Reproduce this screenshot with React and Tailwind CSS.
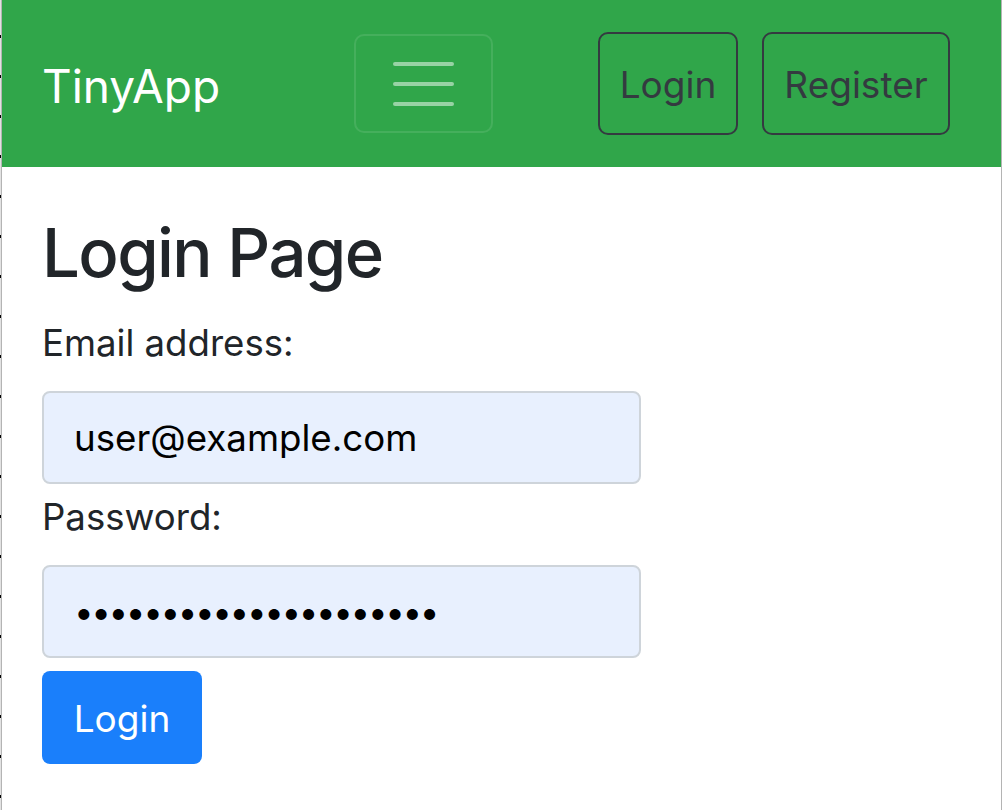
const App = () => {
  return (
    <div className="flex min-h-[810px] w-[1004px] bg-white font-['Inter',sans-serif]">
      {/* window edge on the left */}
      <div className="w-[1px] bg-[#e2e2e2] bg-[repeating-linear-gradient(to_bottom,transparent_0,transparent_35px,#000_35px,#000_38px,transparent_38px,transparent_40px)]"></div>
      <div className="w-[1px] bg-[#b4b4b4]"></div>

      <div className="flex-1 flex flex-col">
        <nav className="h-[167px] bg-[#30a64a] flex items-center pl-[40px]">
          <span className="w-[312px] text-white text-[46px] leading-none pt-[4px]">TinyApp</span>
          <button className="w-[139px] h-[99px] rounded-[10px] border-2 border-white/10 flex flex-col items-center justify-center gap-[16px]">
            <span className="block w-[61px] h-[4px] rounded-full bg-white/50"></span>
            <span className="block w-[61px] h-[4px] rounded-full bg-white/50"></span>
            <span className="block w-[61px] h-[4px] rounded-full bg-white/50"></span>
          </button>
          <div className="ml-[105px] flex gap-[24px]">
            <button className="w-[140px] h-[103px] rounded-[10px] border-2 border-[#343a40] text-[#343a40] text-[37px] pt-[2px]">
              Login
            </button>
            <button className="w-[188px] h-[103px] rounded-[10px] border-2 border-[#343a40] text-[#343a40] text-[37px] pt-[2px]">
              Register
            </button>
          </div>
        </nav>

        <main className="flex-1 pl-[40px] pt-[45px]">
          <h2 className="text-[67px] leading-[82px] font-medium tracking-[-1.6px] text-[#212529] mb-[22px]">Login Page</h2>
          <form className="w-[599px]">
            <label className="block text-[36.6px] leading-[54px] text-[#212529] mb-[21px]">Email address:</label>
            <input
              type="email"
              readOnly
              value="user@example.com"
              className="block w-full h-[93px] rounded-[8px] border-2 border-[#ced4da] bg-[#e8f0fe] pl-[30px] text-[36.7px] text-black outline-none"
            />
            <label className="block mt-[6px] text-[36.6px] leading-[54px] text-[#212529] mb-[21px]">Password:</label>
            <input
              type="password"
              readOnly
              value="supersecretpassword12"
              className="block w-full h-[93px] rounded-[8px] border-2 border-[#ced4da] bg-[#e8f0fe] pl-[30px] text-[35px] tracking-[-2.4px] text-black outline-none"
            />
            <button
              type="button"
              className="mt-[13px] w-[160px] h-[93px] rounded-[8px] bg-[#1a7ffb] text-white text-[37px] pt-[2px]"
            >
              Login
            </button>
          </form>
        </main>
      </div>

      {/* window edge on the right */}
      <div className="w-[1px] bg-[#b4b4b4]"></div>
      <div className="w-[2px] bg-white"></div>
    </div>
  );
};

export default App;
